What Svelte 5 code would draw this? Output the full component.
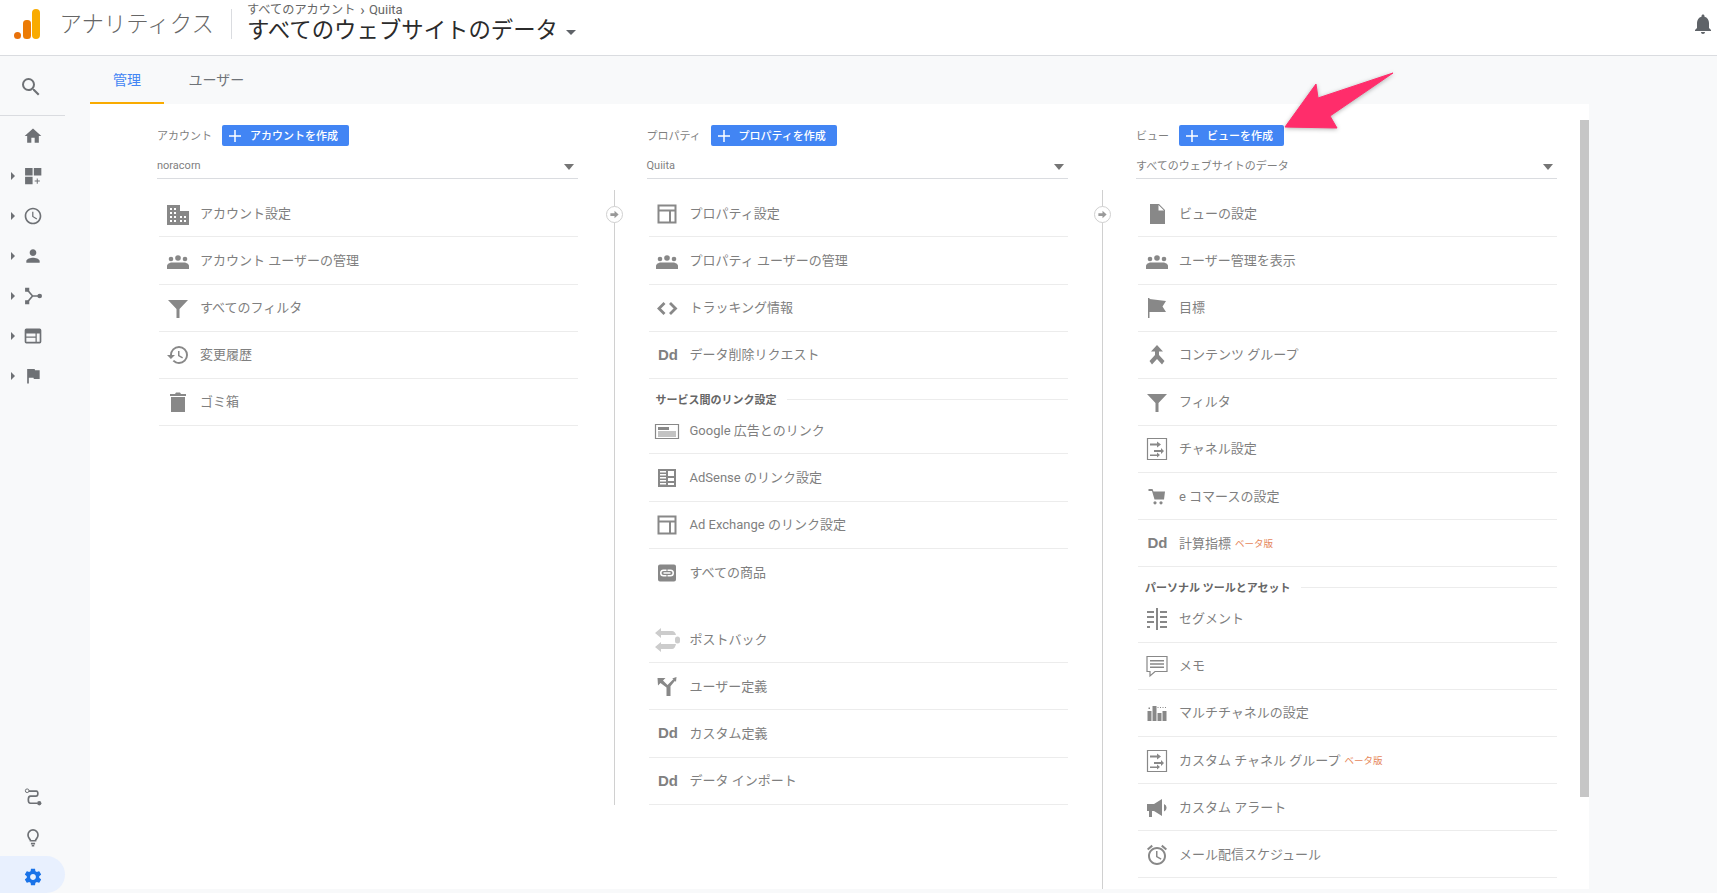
<script>
  const sideTop = [
    { i: 'home' }, { i: 'dash', a: 1 }, { i: 'clock', a: 1 }, { i: 'person', a: 1 },
    { i: 'acq', a: 1 }, { i: 'beh', a: 1 }, { i: 'flag', a: 1 }
  ];
  const columns = [
    {
      label: 'アカウント', btn: 'アカウントを作成', sel: 'noracorn',
      blocks: [
        { t: 'アカウント設定', i: 'building' },
        { t: 'アカウント ユーザーの管理', i: 'group' },
        { t: 'すべてのフィルタ', i: 'filter' },
        { t: '変更履歴', i: 'history' },
        { t: 'ゴミ箱', i: 'trash' }
      ]
    },
    {
      label: 'プロパティ', btn: 'プロパティを作成', sel: 'Quiita', conn: 'short',
      blocks: [
        { t: 'プロパティ設定', i: 'layout' },
        { t: 'プロパティ ユーザーの管理', i: 'group' },
        { t: 'トラッキング情報', i: 'code' },
        { t: 'データ削除リクエスト', i: 'dd' },
        { section: 'サービス間のリンク設定' },
        { t: 'Google 広告とのリンク', i: 'ads' },
        { t: 'AdSense のリンク設定', i: 'adsense' },
        { t: 'Ad Exchange のリンク設定', i: 'layout' },
        { t: 'すべての商品', i: 'link', plain: true },
        { spacer: true },
        { t: 'ポストバック', i: 'postback' },
        { t: 'ユーザー定義', i: 'fork' },
        { t: 'カスタム定義', i: 'dd' },
        { t: 'データ インポート', i: 'dd' }
      ]
    },
    {
      label: 'ビュー', btn: 'ビューを作成', sel: 'すべてのウェブサイトのデータ', conn: 'long',
      blocks: [
        { t: 'ビューの設定', i: 'doc' },
        { t: 'ユーザー管理を表示', i: 'group' },
        { t: '目標', i: 'goal' },
        { t: 'コンテンツ グループ', i: 'merge' },
        { t: 'フィルタ', i: 'filter' },
        { t: 'チャネル設定', i: 'channel' },
        { t: 'e コマースの設定', i: 'cart' },
        { t: '計算指標', i: 'dd', beta: true },
        { section: 'パーソナル ツールとアセット' },
        { t: 'セグメント', i: 'segment' },
        { t: 'メモ', i: 'memo' },
        { t: 'マルチチャネルの設定', i: 'bars' },
        { t: 'カスタム チャネル グループ', i: 'channel', beta: true },
        { t: 'カスタム アラート', i: 'mega' },
        { t: 'メール配信スケジュール', i: 'alarm' }
      ]
    }
  ];
</script>

{#snippet icon(name)}
  <svg class="ic" viewBox="0 0 24 24" aria-hidden="true">
    {#if name === 'home'}<path d="M10 20v-6h4v6h5v-8h3L12 3 2 12h3v8z"/>
    {:else if name === 'dash'}<path d="M2.500 2.500h9v9h-9zM13 2.500h9v9h-9zM2.500 13h9v9h-9z"/><path d="M16.500 15h1.200v2.500h2.500v1.200h-2.500v2.500h-1.200v-2.500H14v-1.200h2.500z"/>
    {:else if name === 'clock'}<path d="M11.990 2C6.470 2 2 6.480 2 12s4.470 10 9.990 10C17.520 22 22 17.520 22 12S17.520 2 11.990 2zM12 20c-4.420 0-8-3.580-8-8s3.580-8 8-8 8 3.580 8 8-3.580 8-8 8zm.5-13H11v6l5.250 3.150.75-1.230-4.500-2.670z"/>
    {:else if name === 'person'}<path d="M12 12c2.210 0 4-1.790 4-4s-1.790-4-4-4-4 1.790-4 4 1.790 4 4 4zm0 2c-2.670 0-8 1.340-8 4v2h16v-2c0-2.660-5.330-4-8-4z"/>
    {:else if name === 'acq'}<path d="M2.500 2h5v5h-5zM2.500 17h5v5h-5z"/><circle cx="20" cy="12" r="2.800"/><path class="ln" d="M5 4.500l6.500 7.500H20M5 19.500l6.500-7.500"/>
    {:else if name === 'beh'}<path fill-rule="evenodd" d="M4 3h16a2 2 0 0 1 2 2v14a2 2 0 0 1-2 2H4a2 2 0 0 1-2-2V5a2 2 0 0 1 2-2zm0 6v3.500h11V9zm12.500 0v10H20V9zM4 14v5h11v-5z"/>
    {:else if name === 'flag'}<path d="M14.400 5L14 3.500H5v17.500h2v-7h5.600l.4 1.500h7V5z"/>
    {:else if name === 'search'}<path d="M15.500 14h-.79l-.28-.27A6.471 6.471 0 0 0 16 9.500 6.500 6.500 0 1 0 9.500 16c1.610 0 3.090-.59 4.230-1.570l.27.28v.79l5 4.990L20.490 19l-4.990-5zm-6 0C7.010 14 5 11.990 5 9.500S7.010 5 9.500 5 14 7.010 14 9.500 11.990 14 9.500 14z"/>
    {:else if name === 'route'}<circle class="ln thin" cx="5" cy="4.500" r="2.200"/><circle cx="19.500" cy="19.500" r="2.600"/><path class="ln" d="M7 5h9c2.500 0 2.500 6-.5 6H9c-3.500 0-3.500 8.500 0 8.500h8"/>
    {:else if name === 'bulb'}<path class="ln" d="M9 16.500c0-2-3-3-3-7a6 6 0 0 1 12 0c0 4-3 5-3 7zM9.500 20h5M10.500 22.500h3"/>
    {:else if name === 'gear'}<path d="M19.430 12.980c.04-.32.07-.64.07-.98s-.03-.66-.07-.98l2.110-1.650c.19-.15.24-.42.12-.64l-2-3.460c-.12-.22-.39-.3-.61-.22l-2.490 1c-.52-.4-1.080-.73-1.690-.98l-.38-2.650C14.460 2.180 14.250 2 14 2h-4c-.25 0-.46.18-.49.42l-.38 2.650c-.61.25-1.170.59-1.690.98l-2.490-1c-.23-.09-.49 0-.61.22l-2 3.460c-.13.22-.07.49.12.64l2.110 1.650c-.04.32-.07.65-.07.98s.03.66.07.98l-2.110 1.650c-.19.15-.24.42-.12.64l2 3.460c.12.22.39.3.61.22l2.490-1c.52.4 1.080.73 1.690.98l.38 2.650c.03.24.24.42.49.42h4c.25 0 .46-.18.49-.42l.38-2.650c.61-.25 1.170-.59 1.690-.98l2.490 1c.23.09.49 0 .61-.22l2-3.460c.12-.22.07-.49-.12-.64l-2.110-1.650zM12 15.500c-1.930 0-3.500-1.570-3.500-3.500s1.570-3.500 3.500-3.500 3.500 1.570 3.500 3.500-1.570 3.500-3.500 3.500z"/>
    {:else if name === 'bell'}<path d="M12 22c1.100 0 2-.9 2-2h-4c0 1.100.89 2 2 2zm6-6v-5c0-3.070-1.640-5.640-4.500-6.320V4c0-.83-.67-1.500-1.500-1.500s-1.500.67-1.500 1.500v.68C7.630 5.360 6 7.920 6 11v5l-2 2v1h16v-1l-2-2z"/>
    {:else if name === 'building'}<path fill-rule="evenodd" d="M1 3h13v6h9v14H1zM4 6v2h2V6zm4 0v2h2V6zM4 10v2h2v-2zm4 0v2h2v-2zM4 14v2h2v-2zm4 0v2h2v-2zm6 0v2h2v-2zm4 0v2h2v-2zM4 18v2h2v-2zm4 0v2h2v-2zm6 0v2h2v-2zm4 0v2h2v-2z"/>
    {:else if name === 'group'}<circle cx="5" cy="10" r="2.300"/><circle cx="12" cy="9" r="2.800"/><circle cx="19" cy="10" r="2.300"/><path d="M1 20v-3c0-1.800 2.500-3.500 5-3.500h12c2.500 0 5 1.700 5 3.500v3z"/>
    {:else if name === 'filter'}<path d="M2 4h20l-8.500 9v9h-3v-9z"/>
    {:else if name === 'history'}<path d="M13 3a9 9 0 0 0-9 9H1l3.890 3.890.07.14L9 12H6c0-3.870 3.130-7 7-7s7 3.130 7 7-3.130 7-7 7c-1.930 0-3.680-.79-4.940-2.060l-1.420 1.420A8.954 8.954 0 0 0 13 21a9 9 0 0 0 0-18zm-1 5v5l4.280 2.540.72-1.210-3.500-2.080V8H12z"/>
    {:else if name === 'trash'}<path d="M5 7h14v15H5zM20 4h-5l-1-1.500h-4L9 4H4v2h16z"/>
    {:else if name === 'layout'}<path class="ln" d="M3.500 3.500h17v17h-17zM3.500 8.500h17M15 8.500v12"/>
    {:else if name === 'code'}<path class="ln thick" d="M9.500 7l-5.500 5.500 5.500 5.500M15 7l5.500 5.500-5.500 5.500"/>
    {:else if name === 'ads'}<path class="ln thin" d="M.5 5.500h23v14H.5z"/><path d="M3 8h11v3H3z"/><path class="ln thin" d="M3 13h18M3 15h18M3 17h18"/>
    {:else if name === 'adsense'}<path fill-rule="evenodd" d="M3 3h18v18H3zM5 5v1.500h6V5zm8 0v5h6V5zM5 8v1.500h6V8zm0 3v1.500h6V11zm8 1v3h6v-3zM5 14v1.500h6V14zm0 3v1.500h6V17zm8 0v2h6v-2z"/>
    {:else if name === 'link'}<path fill-rule="evenodd" d="M5 3.500h14a2 2 0 0 1 2 2v13a2 2 0 0 1-2 2H5a2 2 0 0 1-2-2v-13a2 2 0 0 1 2-2zm3.500 5a3.500 3.500 0 0 0 0 7h3v-1.500h-3a2 2 0 0 1 0-4h3V8.500zm4 0V10h3a2 2 0 0 1 0 4h-3v1.500h3a3.500 3.500 0 0 0 0-7zm-4 2.700v1.600h7v-1.600z"/>
    {:else if name === 'postback'}<g class="pale"><path d="M0 5L6 0v3h11q3 0 4 4H6v3z"/><path d="M0 19l6-5v2h15q-1 5-4 5H6v3z"/><rect x="20" y="8.500" width="5" height="7" rx="2.500"/></g>
    {:else if name === 'fork'}<path d="M2.500 3h8L8 5.500 12.500 10 18.500 4 17 3.500 21.500 2 21 7l-1-1.300-4.500 5.500V21h-4v-8.500L5.500 8 3 10.500z"/>
    {:else if name === 'doc'}<path d="M5 2h9l6 6v14H5zm8.500 1v5.500H19z" fill-rule="evenodd"/>
    {:else if name === 'goal'}<path d="M3 2h1.500v1L21 5l-3.500 5.500L21 16H4.500v6H3z"/>
    {:else if name === 'merge'}<path d="M12 2l6 6.500h-4v3.500l5.500 6-2.500 3.500-5-5.500-5 5.500L4.500 18l5.500-6V8.500H6z"/>
    {:else if name === 'channel'}<path class="ln thin" d="M2.500 1.500h19v21h-19z"/><path d="M5 6.500h7V4.500l4 3-4 3v-2H5zM9 13h7v-2l3 3-3 3v-2H9zM5 17.500h7v-2l3 2.500-3 2.500v-1.500H5z"/>
    {:else if name === 'cart'}<path d="M3.500 4h4l1 2.500H20l-1 8H9.500L7 6H3.500z"/><circle cx="10" cy="17.800" r="1.600"/><circle cx="16" cy="17.800" r="1.600"/>
    {:else if name === 'segment'}<path d="M11 1h2v22h-2zM2 4h7v2H2zM15 4h7v2h-7zM2 9h7v2H2zM15 9h7v2h-7zM2 14h7v2H2zM15 14h7v2h-7zM2 19h3v2H2zM15 19h7v2h-7z"/>
    {:else if name === 'memo'}<path class="ln thin" d="M2 2.500h20v15H10l-5 4.500v-4.500H2z"/><path d="M5 6h14v1.500H5zM5 9.200h14v1.500H5zM5 12.400h14v1.500H5z"/>
    {:else if name === 'bars'}<path d="M2.500 10h4v10h-4zM7.500 5h4v15h-4zM12.500 12h4v8h-4zM17.500 10h4v10h-4z"/><path d="M3.500 6.500h1.500V8H3.500zM12.500 6h1v1h-1zM15 6h1v1h-1zM17.500 6h1v1h-1zM20 6h1v1h-1z"/>
    {:else if name === 'mega'}<path d="M2 8h7l8-5v17l-8-5H7v6H4v-6H2zM19 8a4 4 0 0 1 0 7.500z"/>
    {:else if name === 'alarm'}<path d="M22 5.720l-4.600-3.860-1.290 1.530 4.600 3.860L22 5.720zM7.880 3.390L6.600 1.860 2 5.710l1.290 1.530 4.590-3.850zM12.500 8H11v6l4.750 2.850.75-1.230-4-2.370V8zM12 4c-4.970 0-9 4.030-9 9s4.030 9 9 9 9-4.030 9-9-4.030-9-9-9zm0 16c-3.870 0-7-3.130-7-7s3.130-7 7-7 7 3.130 7 7-3.130 7-7 7z"/>
    {/if}
  </svg>
{/snippet}

<div class="app">
  <header class="top">
    <svg class="logo" viewBox="0 0 26 30" aria-hidden="true">
      <rect x="18" y="0" width="8" height="30" rx="4" fill="#f9ab00"/>
      <rect x="9" y="11" width="8" height="19" rx="3.500" fill="#ec7b04"/>
      <circle cx="3.500" cy="26.500" r="3.500" fill="#e8710a"/>
    </svg>
    <div class="brand">アナリティクス</div>
    <div class="crumb-wrap">
      <div class="crumb">すべてのアカウント<span class="chev">›</span><span class="qu">Quiita</span></div>
      <div class="title">すべてのウェブサイトのデータ<span class="tcaret"></span></div>
    </div>
    <div class="bell">{@render icon('bell')}</div>
  </header>

  <div class="body">
    <nav class="side">
      <div class="sitem search">{@render icon('search')}</div>
      <div class="sep"></div>
      {#each sideTop as s}
        <div class="sitem">
          {#if s.a}<span class="tri"></span>{/if}
          {@render icon(s.i)}
        </div>
      {/each}
      <div class="bottom">
        <div class="sitem">{@render icon('route')}</div>
        <div class="sitem">{@render icon('bulb')}</div>
        <div class="sitem active">{@render icon('gear')}</div>
      </div>
    </nav>

    <main class="main">
      <div class="tabs">
        <div class="tab on">管理</div>
        <div class="tab">ユーザー</div>
      </div>
      <div class="panel">
        <div class="thumb"></div>
        <div class="cols">
          {#each columns as c}
            <section class="col">
              {#if c.conn}
                <div class="conn {c.conn}">
                  <span class="dot"><svg viewBox="0 0 12 12" aria-hidden="true"><path d="M1.500 4.500h4.500V2l4.500 4-4.500 4V7.500H1.500z"/></svg></span>
                </div>
              {/if}
              <div class="head">
                <span class="lab">{c.label}</span>
                <div class="btn">
                  <svg viewBox="0 0 12 12" aria-hidden="true"><path d="M6 0v12M0 6h12"/></svg>
                  <span>{c.btn}</span>
                </div>
              </div>
              <div class="select"><span>{c.sel}</span><span class="caret"></span></div>
              <div class="list">
                {#each c.blocks as b}
                  {#if b.section}
                    <div class="sec"><span>{b.section}</span><i></i></div>
                  {:else if b.spacer}
                    <div class="spacer"></div>
                  {:else}
                    <div class="item" class:plain={b.plain}>
                      <div class="ibox">
                        {#if b.i === 'dd'}<span class="dd">Dd</span>{:else}{@render icon(b.i)}{/if}
                      </div>
                      <span class="txt">{b.t}</span>
                      {#if b.beta}<span class="beta">ベータ版</span>{/if}
                    </div>
                  {/if}
                {/each}
              </div>
            </section>
          {/each}
        </div>
      </div>
    </main>
  </div>

  <svg class="arrow" viewBox="0 0 130 70" aria-hidden="true">
    <path d="M128 2 L53 27 L51 13 L20 56 L72 57 L65 45 Z" />
  </svg>
</div>

<style>
  :global(body) { margin: 0; background: #f8f9fa; }
  .app {
    position: relative; width: 1717px; height: 893px; overflow: hidden;
    font-family: Roboto, "Noto Sans CJK JP", sans-serif; color: #7f7f7f;
    display: flex; flex-direction: column;
  }
  .top {
    height: 56px; box-sizing: border-box; flex: none; background: #fff; border-bottom: 1px solid #dadce0;
    display: flex; align-items: flex-start; position: relative;
  }
  .logo { width: 26px; height: 30px; margin: 9px 0 0 14px; flex: none; }
  .brand {
    font-size: 22.400px; line-height: 30px; color: #666; margin: 9px 0 0 19.500px; width: 155px; font-weight: 300;
    white-space: nowrap;
  }
  .crumb-wrap { margin: 9px 0 0 16.500px; border-left: 1px solid #dadce0; padding-left: 15px; height: 30px; }
  .crumb { font-size: 12.200px; line-height: 12px; color: #666; margin-top: -5px; white-space: nowrap; display: flex; align-items: center; }
  .chev { margin: 0 4px 0 5px; font-size: 15px; }
  .qu { font-size: 13px; }
  .title { font-size: 22.400px; line-height: 30px; margin-top: -1px; color: #2b2b2b; white-space: nowrap; display: flex; align-items: center; }
  .tcaret { width: 0; height: 0; border: 5px solid transparent; border-top: 5px solid #5f6368; border-bottom: 0; margin: 4px 0 0 8px; }
  .bell { margin-left: auto; margin-right: 2px; margin-top: 12px; width: 24px; height: 24px; }
  .bell .ic { fill: #5f6368; }

  .ic { width: 100%; height: 100%; fill: #888; display: block; overflow: visible; }
  .ln { fill: none; stroke: #888; stroke-width: 2; }
  .ln.thin { stroke-width: 1.200; }
  .ln.thick { stroke-width: 2.800; }
  .pale { fill: #ccc; }

  .body { flex: 1; display: flex; min-height: 0; }
  .side { width: 90px; flex: none; display: flex; flex-direction: column; }
  .sitem { height: 40px; width: 65px; position: relative; display: flex; align-items: center; justify-content: center; flex: none; }
  .sitem .ic { width: 20px; height: 20px; fill: #6e7175; }
  .sitem .ln { stroke: #6e7175; }
  .search { margin-top: 10px; height: 42px; }
  .search .ic { width: 24px; height: 24px; margin-left: -4px; }
  .sep { height: 1px; background: #dadce0; width: 65px; margin: 7px 0 0; flex: none; }
  .tri { position: absolute; left: 11px; top: 16px; border: 4px solid transparent; border-left: 4px solid #6e7175; border-right: 0; }
  .bottom { margin-top: auto; }
  .bottom .sitem:nth-child(2) { height: 39px; }
  .sitem.active { background: #e8f0fe; border-radius: 0 20px 20px 0; height: 37px; padding-top: 5px; box-sizing: border-box; }
  .sitem.active .ic { fill: #1a73e8; }

  .main { flex: 1; min-width: 0; padding-right: 128px; }
  .tabs { height: 48px; display: flex; }
  .tab { height: 48px; box-sizing: border-box; font-size: 14px; line-height: 48px; color: #6f7378; padding: 0 23px; }
  .tab.on { color: #4285f4; border-bottom: 2px solid #f9ab00; margin-right: 1.500px; }
  .panel { background: #fff; height: 785px; position: relative; overflow: hidden; }
  .thumb { position: absolute; right: 0; top: 16px; width: 9px; height: 677px; background: #c6c6c6; }
  .cols { display: grid; grid-template-columns: repeat(3, 421px); column-gap: 68.500px; padding: 21px 0 0 67px; }
  .col { position: relative; }
  .conn { position: absolute; left: -32.500px; top: 65px; width: 1px; background: #d0d0d0; }
  .conn.short { height: 615px; }
  .conn.long { left: -34px; height: 720px; }
  .dot {
    position: absolute; left: -8px; top: 16px; width: 15px; height: 15px; border-radius: 50%;
    background: #fff; border: 1px solid #d0d0d0; display: flex; align-items: center; justify-content: center;
  }
  .dot svg { width: 11px; height: 11px; fill: #999; }

  .head { height: 21px; display: flex; align-items: center; }
  .lab { font-size: 11px; width: 65px; white-space: nowrap; margin-top: -2px; }
  .col:nth-child(2) .lab { width: 64px; }
  .col:nth-child(3) .lab { width: 43px; }
  .btn {
    height: 21px; background: #4285f4; border-radius: 2px; color: #fff; display: flex; align-items: center;
    font-size: 11px; font-weight: 500; padding: 0 11px 0 7px; box-sizing: border-box;
  }
  .btn span { margin-top: -2px; }
  .btn svg { width: 12px; height: 12px; margin-right: 9px; fill: none; stroke: #fff; stroke-width: 1.500; }
  .select {
    height: 33px; box-sizing: border-box; border-bottom: 1px solid #dadce0; display: flex; align-items: center;
    justify-content: space-between; font-size: 11px; padding: 8px 4px 2px 0;
  }
  .caret { border: 5px solid transparent; border-top: 6px solid #757575; border-bottom: 0; margin-top: 3px; }
  .list { margin: 11.400px 0 0 2px; }
  .item {
    height: 47.100px; box-sizing: border-box; border-bottom: 1px solid #ececec; display: flex; align-items: center;
    font-size: 13px; padding: 0 0 2px 6.500px;
  }
  .item.plain { border-bottom: 0; }
  .ibox { width: 24px; height: 24px; flex: none; display: flex; align-items: center; justify-content: center; margin: 3px 10.500px 0 0; }
  .txt { white-space: pre; }
  .dd { font: bold 15px "Liberation Sans", sans-serif; color: #808080; margin: -2px 0 0 2px; }
  .beta { font-size: 9.500px; color: #e6885c; margin: 2px 0 0 4px; }
  .spacer { height: 20.500px; }
  .sec { height: 28.600px; display: flex; align-items: center; gap: 10px; font-size: 11px; font-weight: 700; color: #666; padding: 12px 0 0 7px; box-sizing: border-box; }
  .sec i { flex: 1; height: 1px; background: #ececec; }

  .arrow { position: absolute; left: 1265px; top: 71px; width: 130px; height: 70px; overflow: visible; filter: drop-shadow(0 1px 2px rgba(0,0,0,.3)); }
  .arrow path { fill: #ff2d6b; stroke: #ff2d6b; stroke-width: 1; stroke-linejoin: round; }
</style>
